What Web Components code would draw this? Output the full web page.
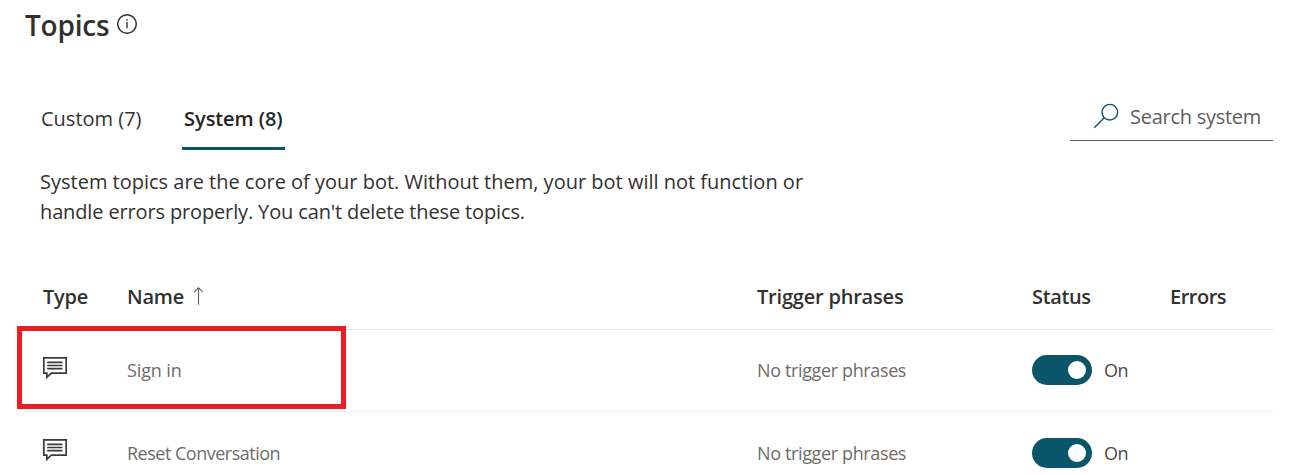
<!DOCTYPE html>
<html lang="en">
<head>
<meta charset="utf-8">
<title>Topics</title>
<style>
html,body{margin:0;height:475px;overflow:hidden;background:#fff}
body{font:400 20px/30px "Open Sans","Noto Sans",sans-serif;color:#323130}
</style>
</head>
<body>
<topics-page></topics-page>
<script>
function define(name, html){
  const t=document.createElement('template');
  t.innerHTML=html;
  customElements.define(name,class extends HTMLElement{
    constructor(){super();this.attachShadow({mode:'open'}).append(t.content.cloneNode(true));}
  });
}

define('info-icon',`<style>:host{display:block;width:22px;height:22px}svg{display:block}</style>
<svg width="22" height="22" viewBox="0 0 22 22"><circle cx="11" cy="11" r="9.3" fill="none" stroke="#323130" stroke-width="1.5"/><path d="M11 9v6.2M11 6.2v1.6" stroke="#323130" stroke-width="1.4"/></svg>`);

define('chat-icon',`<style>:host{display:block;width:26px;height:24px}svg{display:block}</style>
<svg width="26" height="24" viewBox="0 0 26 24" fill="none" stroke="#3b3a39" stroke-width="1.7"><path d="M1.8 1.8H24.2V17.2H9.3L4.8 21.4V17.2H1.8Z"/><path d="M5.2 6.4H20.5M5.2 9.5H20.5M5.2 12.6H20.5"/></svg>`);

define('sort-arrow',`<style>:host{display:block;width:10px;height:18px;margin-left:9px}svg{display:block}</style>
<svg width="10" height="18" viewBox="0 0 10 18" fill="none" stroke="#605e5c" stroke-width="1.1"><path d="M5.5 17.7V1M1 5.2L5.5.8L10 5.2"/></svg>`);

define('topic-tab',`<style>
:host{display:block;box-sizing:border-box;height:46px;line-height:30px;white-space:nowrap;padding:0 2px;letter-spacing:0}
:host([selected]){font-weight:600;border-bottom:3px solid #0b556a;width:103px;letter-spacing:-.08px;color:#252423}
</style><slot></slot>`);

define('search-box',`<style>
:host{display:flex;box-sizing:border-box;width:203px;height:40px;border-bottom:1px solid #605e5c;padding:0 0 9px 23px;align-items:center;color:#605e5c;letter-spacing:-.27px;white-space:nowrap}
svg{display:block;margin-right:11px}
.text{padding-top:2px}
</style>
<svg width="26" height="26" viewBox="0 0 26 26" fill="none" stroke="#0b556a" stroke-width="1.4"><circle cx="16.8" cy="9.2" r="7.8"/><path d="M11.2 14.8L1.3 24.7"/></svg><span class="text"><slot></slot></span>`);

define('toggle-switch',`<style>
:host{display:flex;align-items:center;gap:12px;font-size:18px;color:#4a4846;letter-spacing:-.5px}
.track{box-sizing:border-box;width:60px;height:30px;border-radius:15px;background:#0b556a;padding:6px;display:flex;justify-content:flex-end}
.thumb{width:18px;height:18px;border-radius:50%;background:#fff}
</style><span class="track"><span class="thumb"></span></span><slot></slot>`);

define('topic-header',`<style>
:host{display:grid;grid-template-columns:102px 630px 275px 138px 103px;box-sizing:border-box;height:67px;align-items:center;border-bottom:1px solid #e5e5e5;font-weight:600;letter-spacing:-.2px;color:#323130}
div{display:flex;align-items:center;padding-top:2px}.type{padding-left:18px}
sort-arrow{margin-top:-2px}
</style><div class="type">Type</div><div>Name<sort-arrow></sort-arrow></div><div>Trigger phrases</div><div style="letter-spacing:-.35px">Status</div><div style="letter-spacing:-.5px">Errors</div>`);

define('topic-row',`<style>
:host{display:grid;grid-template-columns:102px 630px 275px 241px;box-sizing:border-box;height:82px;align-items:center;border-bottom:1px solid #efefef;padding-bottom:1px;font-size:18px;color:#6e6c6a}
:host([last]){border:0;padding:0}
chat-icon{margin:-5px 0 0 17px}
:host([last]) chat-icon{margin-top:-6px}
.name{letter-spacing:var(--fit,-.12px)}.phrases{letter-spacing:-.37px}
</style><chat-icon></chat-icon><div class="name"><slot></slot></div><div class="phrases"><slot name="phrases"></slot></div><toggle-switch>On</toggle-switch>`);

define('red-callout',`<style>:host{display:block;position:absolute;left:-8px;top:63px;box-sizing:border-box;width:329px;height:83px;border:5px solid #ee1c25;pointer-events:none}</style>`);

define('topics-page',`<style>
:host{display:block;width:1248px;padding:5px 16px 0 25px;box-sizing:content-box}
header{display:flex;height:40px;gap:7px}
h1{margin:0;font-size:28px;line-height:40px;font-weight:600;letter-spacing:-.2px}
info-icon{margin-top:8px}
.bar{display:flex;justify-content:space-between;align-items:flex-start;margin-top:56px;height:66px}
.tabs{display:flex;gap:38.6px;padding:3px 0 0 14px}
p{margin:0 0 36px 15px;height:60px;white-space:nowrap}
.table{position:relative}
</style>
<header><h1>Topics</h1><info-icon></info-icon></header>
<div class="bar"><div class="tabs"><topic-tab>Custom (7)</topic-tab><topic-tab selected>System (8)</topic-tab></div><search-box>Search system</search-box></div>
<p>System topics are the core of your bot. Without them, your bot will not function or<br><span style="letter-spacing:-.14px">handle errors properly. You can't delete these topics.</span></p>
<div class="table"><topic-header></topic-header>
<topic-row>Sign in<span slot="phrases">No trigger phrases</span></topic-row>
<topic-row last style="--fit:-.5px">Reset Conversation<span slot="phrases">No trigger phrases</span></topic-row>
<red-callout></red-callout></div>`);
</script>
</body>
</html>
